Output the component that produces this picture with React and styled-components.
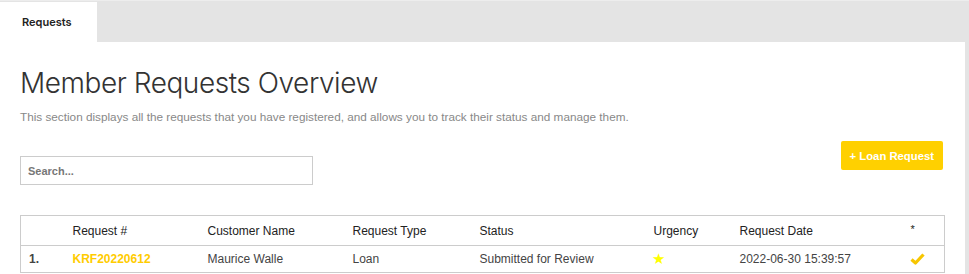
import React from "react";
import styled, { createGlobalStyle } from "styled-components";

const GlobalStyle = createGlobalStyle`
  html, body {
    margin: 0;
    padding: 0;
    background: #e4e4e4;
  }
  * {
    box-sizing: border-box;
  }
`;

const columns = [
  { label: "", width: 44 },
  { label: "Request #", width: 135 },
  { label: "Customer Name", width: 145 },
  { label: "Request Type", width: 127 },
  { label: "Status", width: 174 },
  { label: "Urgency", width: 86 },
  { label: "Request Date", width: 171 },
  { label: "*", width: 42 },
];

const CheckIcon = () => (
  <svg width="15" height="12" viewBox="0 0 15 12">
    <path
      d="M1.5 6.5 L5.5 10 L13.5 1.5"
      fill="none"
      stroke="#f7c600"
      strokeWidth="3.2"
      strokeLinejoin="round"
    />
  </svg>
);

const App = () => {
  return (
    <Page>
      <GlobalStyle />
      <TabBar>
        <Tab>Requests</Tab>
      </TabBar>
      <Panel>
        <Title>Member Requests Overview</Title>
        <Description>
          This section displays all the requests that you have registered, and
          allows you to track their status and manage them.
        </Description>
        <Toolbar>
          <SearchInput placeholder="Search..." />
          <AddButton>+ Loan Request</AddButton>
        </Toolbar>
        <Table>
          <colgroup>
            {columns.map((c, i) => (
              <col key={i} style={{ width: c.width }} />
            ))}
          </colgroup>
          <thead>
            <tr>
              {columns.map((c, i) => (
                <HeadCell key={i} $small={c.label === "*"}>
                  {c.label}
                </HeadCell>
              ))}
            </tr>
          </thead>
          <tbody>
            <tr>
              <Cell $bold>1.</Cell>
              <Cell>
                <RequestLink>KRF20220612</RequestLink>
              </Cell>
              <Cell>Maurice Walle</Cell>
              <Cell>Loan</Cell>
              <Cell>Submitted for Review</Cell>
              <Cell>
                <Star>★</Star>
              </Cell>
              <Cell>2022-06-30 15:39:57</Cell>
              <Cell>
                <CheckIcon />
              </Cell>
            </tr>
          </tbody>
        </Table>
      </Panel>
    </Page>
  );
};

const Page = styled.div`
  width: 100%;
  min-height: 274px;
  background: #e4e4e4;
`;

const TabBar = styled.div`
  display: flex;
  height: 42px;
  padding-top: 1px;
  background: #e4e4e4;
  border-top: 1px solid #ededed;
`;

const Tab = styled.div`
  width: 97px;
  background: #ffffff;
  display: flex;
  align-items: center;
  padding-left: 22px;
  font-family: Inter, "Noto Sans", sans-serif;
  font-weight: 600;
  font-size: 11px;
  color: #222;
`;

const Panel = styled.div`
  width: calc(100% - 4px);
  background: #ffffff;
  padding: 24px 21px 10px 20px;
  min-height: 232px;
`;

const Title = styled.h1`
  margin: 0;
  font-family: Inter, "Noto Sans", sans-serif;
  font-weight: 300;
  font-size: 28px;
  line-height: 34px;
  color: #333;
  letter-spacing: -0.45px;
`;

const Description = styled.p`
  margin: 10px 0 0;
  font-family: "Liberation Sans", Arial, sans-serif;
  font-size: 11.75px;
  line-height: 14px;
  color: #888;
`;

const Toolbar = styled.div`
  display: flex;
  justify-content: space-between;
  align-items: flex-start;
  margin-top: 17px;
  padding-right: 1px;
`;

const SearchInput = styled.input`
  margin-top: 15px;
  width: 293px;
  height: 29px;
  border: 1px solid #cccccc;
  padding: 0 7px;
  font-family: "Liberation Sans", Arial, sans-serif;
  font-size: 11px;
  outline: none;
  &::placeholder {
    color: #777;
    font-weight: 700;
  }
`;

const AddButton = styled.button`
  height: 29px;
  padding: 0 9px;
  border: none;
  border-radius: 2px;
  background: #ffd000;
  color: #ffffff;
  font-family: "Liberation Sans", Arial, sans-serif;
  font-weight: 700;
  font-size: 11.3px;
  cursor: pointer;
`;

const Table = styled.table`
  margin-top: 30px;
  width: 924px;
  table-layout: fixed;
  border-collapse: collapse;
  border: 1px solid #cccccc;
  font-family: "Liberation Sans", Arial, sans-serif;
  font-size: 12px;
`;

const HeadCell = styled.th`
  height: 30px;
  padding: ${(p) => (p.$small ? "0 8px 4px" : "0 8px")};
  text-align: left;
  font-weight: 400;
  color: #222;
  font-size: ${(p) => (p.$small ? "11px" : "12px")};
  border-bottom: 1px solid #cccccc;
`;

const Cell = styled.td`
  height: 27px;
  padding: 0 8px;
  color: #444;
  font-weight: ${(p) => (p.$bold ? 700 : 400)};
  border-bottom: 1px solid #cccccc;
  vertical-align: middle;

  svg {
    display: block;
    margin-left: -1px;
  }
`;

const RequestLink = styled.span`
  color: #ffcc00;
  font-weight: 700;
`;

const Star = styled.span`
  color: #ffff00;
  font-size: 15px;
  margin-left: -2px;
`;

export default App;
